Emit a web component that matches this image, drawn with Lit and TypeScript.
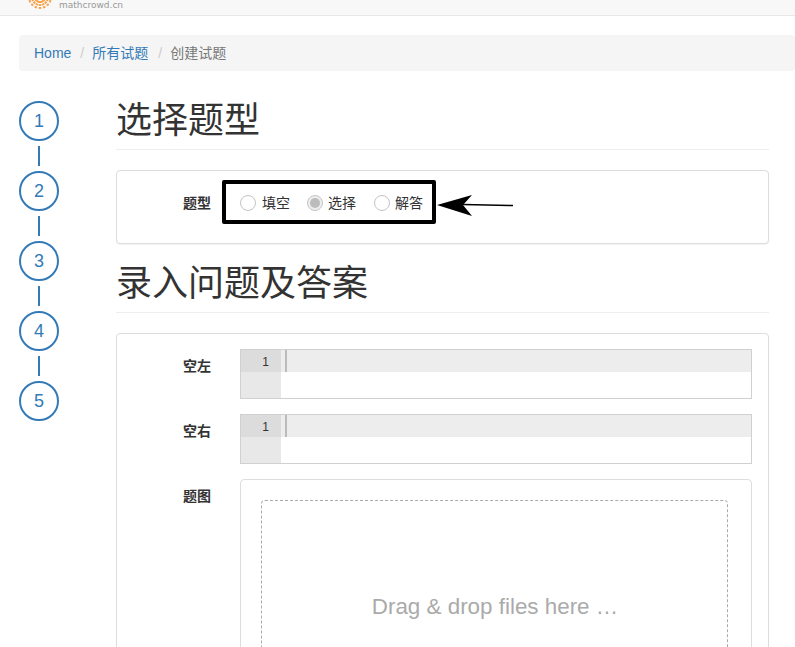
import { LitElement, html, css, svg } from "lit";
import { customElement } from "lit/decorators.js";

@customElement("app-root")
export class AppRoot extends LitElement {
  static styles = css`
    :host {
      display: block;
      width: 795px;
      height: 647px;
      overflow: hidden;
      background: #fff;
      font-family: "Liberation Sans", "Noto Sans CJK SC", sans-serif;
      font-size: 14px;
      line-height: 20px;
      color: #333;
    }
    * { box-sizing: border-box; }
    .nav {
      height: 16px;
      background: #f8f8f8;
      border-bottom: 1px solid #e7e7e7;
      padding-left: 27px;
      display: flex;
      align-items: flex-start;
      overflow: hidden;
    }
    .logo { display: block; margin-top: -16px; width: 26px; height: 26px; flex: none; }
    .brand { line-height: 10px; color: #999; margin-left: 6px; font-family: "DejaVu Sans", sans-serif; font-size: 9px; }
    .crumb {
      margin: 19px 0 0 19px;
      width: 776px;
      height: 36px;
      background: #f5f5f5;
      border-radius: 4px;
      padding: 8px 15px;
      display: flex;
      color: #777;
    }
    .crumb a { color: #337ab7; }
    .crumb .sep { color: #ccc; padding: 0 8px 0 9px; white-space: pre; }
    .crumb .sep2 { padding-left: 10px; }
    .body { display: flex; padding: 29px 26px 0 19px; }
    .steps { width: 40px; flex: none; display: flex; flex-direction: column; align-items: center; margin: 1px 57px 0 0; }
    .step {
      width: 40px;
      height: 40px;
      border: 2px solid #337ab7;
      border-radius: 50%;
      color: #337ab7;
      font-size: 18px;
      display: flex;
      align-items: center;
      justify-content: center;
    }
    .link { width: 2px; height: 20px; margin: 5px 0; background: #337ab7; }
    .main { flex: 1; min-width: 0; }
    h2 {
      margin: 0;
      padding-top: 1px;
      font-size: 36px;
      line-height: 40px;
      font-weight: 400;
      height: 50px;
      border-bottom: 1px solid #eee;
      color: #333;
    }
    .panel {
      border: 1px solid #ddd;
      border-radius: 4px;
      box-shadow: 0 1px 1px rgba(0,0,0,.05);
      background: #fff;
    }
    .p1 { margin-top: 20px; height: 74px; display: flex; padding-top: 9px; position: relative; }
    .p1 .lab { padding-top: 13px; }
    .lab { width: 94px; flex: none; text-align: right; font-weight: 700; color: #333; }
    .box {
      margin-left: 11px;
      width: 214px;
      height: 44px;
      border: 4px solid #000;
      border-radius: 2px;
      display: flex;
      align-items: center;
      padding: 1px 0 0 14px;
    }
    .opt { display: flex; align-items: center; width: 67px; flex: none; }
    .opt:nth-child(2) .radio, .opt:nth-child(3) .radio { margin-right: 5px; }
    .radio { width: 16px; height: 16px; border-radius: 50%; border: 1px solid #c4c4c4; background: #fff; margin-right: 6px; flex: none; display: flex; align-items: center; justify-content: center; }
    .radio.on { background: #eee; }
    .radio.on::after { content: ""; width: 10px; height: 10px; border-radius: 50%; background: #bcbcbc; }
    .arrow { position: absolute; left: 320px; top: 22px; }
    .h2b { margin-top: 19px; }
    .p2 { margin-top: 20px; height: 400px; padding: 15px 16px 0 0; }
    .row { display: flex; }
    .row .lab { padding-top: 7px; }
    .field { margin-left: 29px; flex: 1; }
    .editor { height: 50px; border: 1px solid #d0d0d0; background: #fff; display: flex; }
    .gutter { width: 40px; background: #e8e8e8; flex: none; }
    .num { height: 22px; background: #dcdcdc; font-size: 12px; color: #333; text-align: right; padding: 1px 12px 0 0; line-height: 22px; font-family: "Liberation Sans", sans-serif; }
    .line { flex: 1; height: 22px; background: #ededed; padding-left: 4px; }
    .cursor { width: 2px; height: 22px; background: #bbb; }
    .r2 { margin-top: 15px; }
    .r3 { margin-top: 15px; }
    .drop { border: 1px solid #ddd; border-radius: 4px; height: 300px; padding: 20px 23px 0 20px; }
    .dash { border: 1px dashed #aaa; border-radius: 4px; height: 280px; text-align: center; color: #aaa; font-size: 22.4px; padding: 94px 0 0 1px; line-height: 24px; }
  `;

  private logo() {
    const spokes = [];
    for (let i = 0; i < 16; i++) {
      const a = (i * Math.PI) / 8;
      spokes.push(svg`<line x1=${13 + 4 * Math.cos(a)} y1=${13 + 4 * Math.sin(a)} x2=${13 + 12.5 * Math.cos(a)} y2=${13 + 12.5 * Math.sin(a)} stroke="#f8a24a" stroke-width="2.4" stroke-dasharray="2 1"></line>`);
    }
    return html`<svg class="logo" viewBox="0 0 26 26">${spokes}</svg>`;
  }

  render() {
    return html`
      <div class="nav">${this.logo()}<span class="brand">mathcrowd.cn</span></div>
      <div class="crumb"><a>Home</a><span class="sep">/</span><a>所有试题</a><span class="sep sep2">/</span><span>创建试题</span></div>
      <div class="body">
        <div class="steps">
          <div class="step">1</div><div class="link"></div>
          <div class="step">2</div><div class="link"></div>
          <div class="step">3</div><div class="link"></div>
          <div class="step">4</div><div class="link"></div>
          <div class="step">5</div>
        </div>
        <div class="main">
          <h2>选择题型</h2>
          <div class="panel p1">
            <div class="lab">题型</div>
            <div class="box">
              <div class="opt"><span class="radio"></span>填空</div>
              <div class="opt"><span class="radio on"></span>选择</div>
              <div class="opt"><span class="radio"></span>解答</div>
            </div>
            <svg class="arrow" width="78" height="26" viewBox="0 0 78 26">
              <path d="M76 12.5 L26 11.5" stroke="#000" stroke-width="1.5" fill="none"></path>
              <path d="M0 12 L35 2 L26 12 L35 23 Z" fill="#000"></path>
            </svg>
          </div>
          <h2 class="h2b">录入问题及答案</h2>
          <div class="panel p2">
            <div class="row"><div class="lab">空左</div><div class="field"><div class="editor"><div class="gutter"><div class="num">1</div></div><div class="line"><div class="cursor"></div></div></div></div></div>
            <div class="row r2"><div class="lab">空右</div><div class="field"><div class="editor"><div class="gutter"><div class="num">1</div></div><div class="line"><div class="cursor"></div></div></div></div></div>
            <div class="row r3"><div class="lab">题图</div><div class="field"><div class="drop"><div class="dash">Drag &amp; drop files here …</div></div></div></div>
          </div>
        </div>
      </div>
    `;
  }
}
